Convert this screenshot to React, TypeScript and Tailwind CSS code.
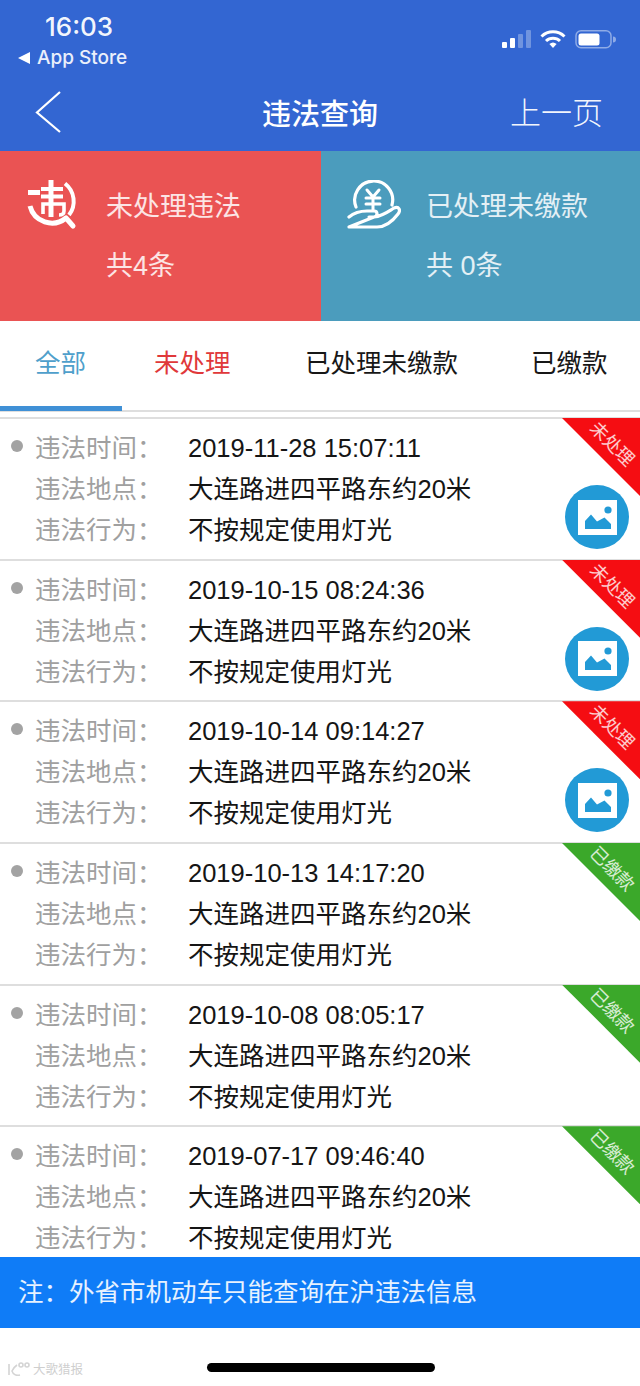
const rows = [
  { time: '2019-11-28 15:07:11', status: '未处理', red: true },
  { time: '2019-10-15 08:24:36', status: '未处理', red: true },
  { time: '2019-10-14 09:14:27', status: '未处理', red: true },
  { time: '2019-10-13 14:17:20', status: '已缴款', red: false },
  { time: '2019-10-08 08:05:17', status: '已缴款', red: false },
  { time: '2019-07-17 09:46:40', status: '已缴款', red: false },
];

function StatusIcons() {
  return (
    <div className="flex items-start">
      <svg width="30" height="19" viewBox="0 0 30 19">
        <rect x="0" y="12" width="5" height="6" rx="1" fill="#fff" />
        <rect x="8" y="8" width="5" height="10" rx="1" fill="#fff" />
        <rect x="16" y="4" width="5" height="14" rx="1" fill="#fff" fillOpacity="0.3" />
        <rect x="24" y="0" width="5" height="18" rx="1" fill="#fff" fillOpacity="0.3" />
      </svg>
      <svg width="26" height="19" viewBox="0 0 26 19" className="ml-[8px]">
        <path d="M1.5 6.5a16.5 16.5 0 0 1 23 0" fill="none" stroke="#fff" strokeWidth="3" />
        <path d="M6 11a10 10 0 0 1 14 0" fill="none" stroke="#fff" strokeWidth="3" />
        <path d="M13 18l-3.6-4a5.5 5.5 0 0 1 7.2 0z" fill="#fff" />
      </svg>
      <svg width="41" height="19" viewBox="0 0 41 19" className="ml-[9px]">
        <rect x="1" y="0.8" width="35" height="17" rx="5" fill="none" stroke="#fff" strokeOpacity="0.45" strokeWidth="1.5" />
        <rect x="3.5" y="3.5" width="21" height="12" rx="2.5" fill="#fff" />
        <path d="M38 6.5a3 3 0 0 1 0 6z" fill="#fff" fillOpacity="0.45" />
      </svg>
    </div>
  );
}

function ViolationIcon() {
  return (
    <svg width="50" height="50" viewBox="0 0 50 50" className="shrink-0" fill="none" stroke="#fff">
      <path d="M1 12.5H13" strokeWidth="5" />
      <path d="M3 26A22.5 22.5 0 0 0 39 38" strokeWidth="5" />
      <path d="M38 3.5A22.5 22.5 0 0 1 42 35" strokeWidth="4" />
      <path d="M39 38l7 8" strokeWidth="5" strokeLinecap="round" />
      <path d="M24 0V37" strokeWidth="5" />
      <path d="M14 9H36M14 16.5H36" strokeWidth="4" />
      <path d="M16 34V24H37V31Q37 35 32 35" strokeWidth="3.6" />
    </svg>
  );
}

function CoinHandIcon() {
  return (
    <svg width="54" height="50" viewBox="0 0 54 50" className="shrink-0" fill="none" stroke="#fff" strokeWidth="3.2" strokeLinecap="round" strokeLinejoin="round">
      <path d="M9 27A19 19 0 1 1 45 25" />
      <path d="M2 37C8 32 14 31 20 31H27C31 31 31 36 27 37H22M27 37C36 36 42 31 47 28C52 26 54 30 51 34C45 42 38 47 30 47H2Z" />
      <path d="M20 10l6 7 6-7M19 18H33M19 24H33M26 17V30" strokeWidth="3" />
    </svg>
  );
}

function PhotoIcon() {
  return (
    <svg width="39" height="35" viewBox="0 0 39 35">
      <rect width="39" height="35" fill="#fff" />
      <circle cx="30" cy="10" r="3.6" fill="#229ad6" />
      <path d="M7 29V21L13 14.5 19 21.5 26.5 17.5 33 24V29Z" fill="#229ad6" />
    </svg>
  );
}

function ViolationRow({ time, status, red }: { time: string; status: string; red: boolean }) {
  return (
    <div className="relative h-[141.67px] shrink-0 border-t-2 border-[#dedede] pl-[35px] pt-[9px] text-[25.5px] leading-[41px]">
      <div className="absolute left-[11px] top-[21px] h-[12px] w-[12px] rounded-full bg-[#a3a3a3]" />
      <div className="flex">
        <span className="w-[153px] text-[#a0a0a0]">违法时间：</span>
        <span className="text-[#151515]">{time}</span>
      </div>
      <div className="flex">
        <span className="w-[153px] text-[#a0a0a0]">违法地点：</span>
        <span className="text-[#151515]">大连路进四平路东约20米</span>
      </div>
      <div className="flex">
        <span className="w-[153px] text-[#a0a0a0]">违法行为：</span>
        <span className="text-[#151515]">不按规定使用灯光</span>
      </div>
      <div className={`absolute right-0 top-[-1px] h-[78px] w-[78px] [clip-path:polygon(0_0,100%_0,100%_100%)] ${red ? 'bg-[#f50d12]' : 'bg-[#3ba82a]'}`} />
      <div className="absolute right-[-12px] top-[14px] w-[80px] rotate-45 text-center text-[18px] leading-[22px] text-white/80">{status}</div>
      {red && (
        <div className="absolute left-[565px] top-[66px] flex h-[64px] w-[64px] items-center justify-center rounded-full bg-[#229ad6]">
          <PhotoIcon />
        </div>
      )}
    </div>
  );
}

export default function App() {
  return (
    <div className="flex h-[1386px] w-[640px] flex-col overflow-hidden bg-white font-['Liberation_Sans','Noto_Sans_CJK_SC',sans-serif]">
      <header className="h-[151px] shrink-0 bg-[#3366d2] text-white">
        <div className="flex h-[75px] justify-between pl-[18px] pr-[24px]">
          <div>
            <div className="mt-[11px] pl-[27px] font-['Inter',sans-serif] text-[26px] font-medium leading-[32px] text-white/95">16:03</div>
            <div className="mt-[2px] flex items-center gap-[7px] font-['Inter',sans-serif] text-[19px] font-medium leading-[26px] text-white/90">
              <span className="h-0 w-0 border-y-[6px] border-r-[12px] border-y-transparent border-r-white" />
              App Store
            </div>
          </div>
          <div className="pt-[30px]">
            <StatusIcons />
          </div>
        </div>
        <div className="relative flex h-[76px] items-center justify-center text-[29px] leading-[38px]">
          <svg width="28" height="44" viewBox="0 0 28 44" className="absolute left-[34px] top-[15px]" fill="none" stroke="#fff" strokeWidth="2.2">
            <path d="M26 2L3 22.5 26 42" />
          </svg>
          <span className="mt-[3px] font-medium">违法查询</span>
          <span className="absolute right-[37px] top-[20px] text-[31px] font-light text-white/95">上一页</span>
        </div>
      </header>

      <section className="flex h-[170px] shrink-0 text-[27px] leading-[36px] text-white/85">
        <div className="flex w-[321px] bg-[#ea5353] pl-[27px] pt-[29px]">
          <ViolationIcon />
          <div className="pl-[29px] pt-[9px]">
            <div>未处理违法</div>
            <div className="mt-[23px]">共4条</div>
          </div>
        </div>
        <div className="flex flex-1 bg-[#4b9cbd] pl-[26px] pt-[29px]">
          <CoinHandIcon />
          <div className="pl-[25px] pt-[9px]">
            <div>已处理未缴款</div>
            <div className="mt-[23px]">共 0条</div>
          </div>
        </div>
      </section>

      <nav className="relative flex h-[91px] shrink-0 border-b-2 border-[#dedede] text-[25.5px] leading-[34px] text-[#171717]">
        <span className="absolute left-[35px] top-[25px] text-[#4f9fcb]">全部</span>
        <span className="absolute left-[154px] top-[25px] text-[#e0383a]">未处理</span>
        <span className="absolute left-[305px] top-[25px]">已处理未缴款</span>
        <span className="absolute left-[531px] top-[25px]">已缴款</span>
        <span className="absolute bottom-[-1px] left-0 h-[5px] w-[122px] bg-[#3f90d6]" />
      </nav>

      <main className="mt-[5px] flex h-[840px] shrink-0 flex-col overflow-hidden">
        {rows.map((r) => (
          <ViolationRow key={r.time} {...r} />
        ))}
      </main>

      <footer className="flex h-[71px] shrink-0 items-center bg-[#0f7cf7] pl-[18px] text-[25.5px] text-white/90">
        注：外省市机动车只能查询在沪违法信息
      </footer>

      <div className="relative flex-1">
        <div className="absolute left-[207px] top-[35px] h-[9px] w-[228px] rounded-full bg-black" />
        <div className="absolute left-[7px] top-[34px] flex items-center gap-[3px] text-[12.5px] leading-[16px] text-[#cfcfcf]">
          <svg width="23" height="16" viewBox="0 0 23 16" fill="none" stroke="#d4d4d4" strokeWidth="1.6">
            <path d="M2 2V13M10 3C7 5 6 7 5 9C6 12 9 14 13 13" />
            <circle cx="14" cy="3" r="2" />
            <circle cx="20" cy="3" r="2" />
          </svg>
          大歌猎报
        </div>
      </div>
    </div>
  );
}
